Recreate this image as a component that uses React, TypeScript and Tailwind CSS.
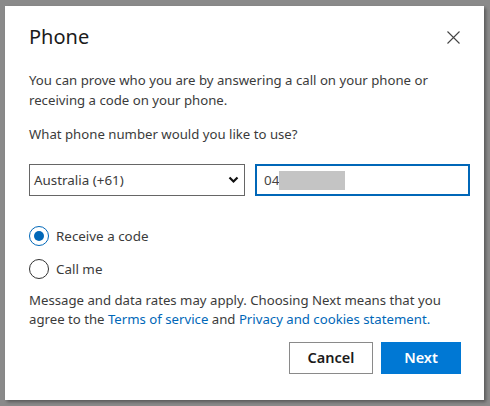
import React from "react";

export default function App() {
  return (
    <div
      className="w-[490px] h-[406px] bg-[#8a8a8a] pt-[6px] pl-[5px]"
      style={{ fontFamily: '"Segoe UI", "Noto Sans", sans-serif' }}
    >
      <div className="relative w-[479px] h-[394px] bg-white shadow-[2px_2px_3px_rgba(0,0,0,0.35)] pl-[24px] pt-[17px] text-[#3b3b3b]">
        <div className="text-[20px] leading-[28px] font-normal text-[#1b1b1b]">Phone</div>
        <button className="absolute left-[436px] top-[19px] w-[24px] h-[24px] flex items-center justify-center">
          <svg width="13" height="13" viewBox="0 0 13 13">
            <path d="M0.5 0.5L12.5 12.5M12.5 0.5L0.5 12.5" stroke="#444" strokeWidth="1.1" />
          </svg>
        </button>
        <p className="mt-[19px] text-[13.2px] leading-[20px] w-[440px]">
          You can prove who you are by answering a call on your phone or receiving a code on your phone.
        </p>
        <p className="mt-[14px] text-[13.2px] leading-[20px]">What phone number would you like to use?</p>
        <div className="mt-[20px] flex gap-[10px]">
          <div className="w-[216px] h-[32px] border border-[#666] flex items-center justify-between pl-[4px] pr-[5px] text-[13.4px]">
            <span>Australia (+61)</span>
            <svg width="11" height="8" viewBox="0 0 11 8">
              <path d="M1.5 1.5L5.5 5.5L9.5 1.5" stroke="#111" strokeWidth="2.2" fill="none" />
            </svg>
          </div>
          <div className="w-[215px] h-[32px] border-2 border-[#0067b8] flex items-center pl-[7px] text-[13.4px]">
            <span className="text-[#444]">04</span>
            <span className="w-[66px] h-[19px] bg-[#c4c4c4]" />
          </div>
        </div>
        <div className="mt-[30px] flex items-center h-[20px] gap-[7px] text-[13.4px]">
          <span className="w-[20px] h-[20px] rounded-full border border-[#0067b8] flex items-center justify-center">
            <span className="w-[10px] h-[10px] rounded-full bg-[#0067b8]" />
          </span>
          <span>Receive a code</span>
        </div>
        <div className="mt-[13px] flex items-center h-[20px] gap-[7px] text-[13.4px]">
          <span className="w-[20px] h-[20px] rounded-full border border-[#333]" />
          <span>Call me</span>
        </div>
        <div className="mt-[12px] text-[13.2px] leading-[19px] w-[440px]">
          Message and data rates may apply. Choosing Next means that you agree to the{" "}
          <span className="text-[#0067b8]">Terms of service</span> and{" "}
          <span className="text-[#0067b8]">Privacy and cookies statement.</span>
        </div>
        <div className="mt-[13px] flex justify-end gap-[8px] pr-[23px]">
          <button className="w-[84px] h-[32px] border border-[#8a8a8a] text-[14.5px] font-semibold text-[#1b1b1b]">Cancel</button>
          <button className="w-[80px] h-[32px] bg-[#0078d4] text-white text-[14.5px] font-semibold">Next</button>
        </div>
      </div>
    </div>
  );
}
